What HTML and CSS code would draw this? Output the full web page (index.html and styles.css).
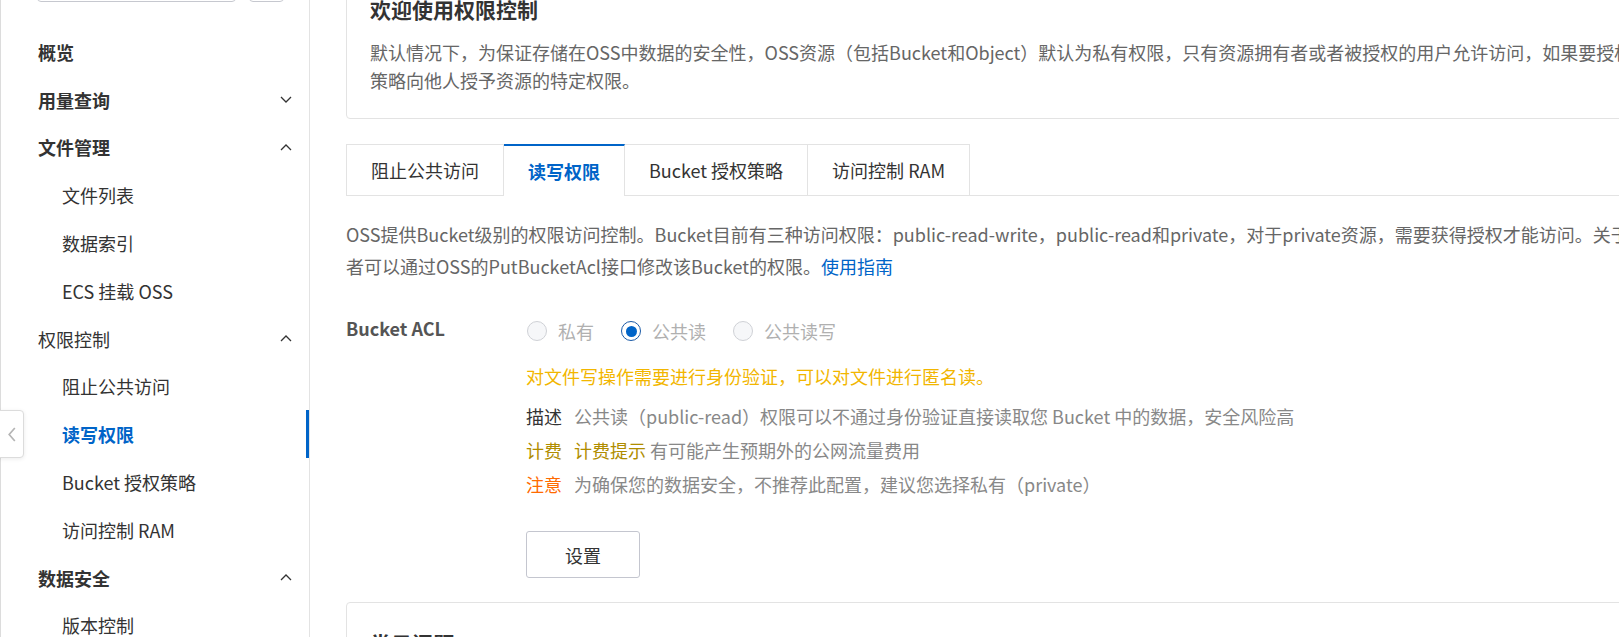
FILE: index.html
```html
<!DOCTYPE html>
<html lang="zh-CN">
<head>
<meta charset="utf-8">
<title>读写权限</title>
<link rel="stylesheet" href="styles.css">
</head>
<body>
<div class="app">
  <aside class="sidebar">
    <div class="search">
      <div class="search-input"></div>
      <div class="search-btn"></div>
    </div>
    <nav class="menu">
      <div class="item top">概览</div>
      <div class="item top">用量查询<svg class="chev" viewBox="0 0 12 7"><polyline points="1,1 6,6 11,1"/></svg></div>
      <div class="item top">文件管理<svg class="chev" viewBox="0 0 12 7"><polyline points="1,6 6,1 11,6"/></svg></div>
      <div class="item sub">文件列表</div>
      <div class="item sub">数据索引</div>
      <div class="item sub">ECS 挂载 OSS</div>
      <div class="item top plain">权限控制<svg class="chev" viewBox="0 0 12 7"><polyline points="1,6 6,1 11,6"/></svg></div>
      <div class="item sub">阻止公共访问</div>
      <div class="item sub active">读写权限</div>
      <div class="item sub">Bucket 授权策略</div>
      <div class="item sub">访问控制 RAM</div>
      <div class="item top">数据安全<svg class="chev" viewBox="0 0 12 7"><polyline points="1,6 6,1 11,6"/></svg></div>
      <div class="item sub">版本控制</div>
    </nav>
  </aside>
  <div class="collapse"><svg viewBox="0 0 10 16"><polyline points="8,1 2,8 8,15"/></svg></div>
  <main class="main">
    <section class="card welcome">
      <h2 class="card-title">欢迎使用权限控制</h2>
      <p class="card-text">默认情况下，为保证存储在OSS中数据的安全性，OSS资源（包括Bucket和Object）默认为私有权限，只有资源拥有者或者被授权的用户允许访问，如果要授权其他用户访问或使用您的OSS资源，可以通过多种<br>策略向他人授予资源的特定权限。</p>
    </section>
    <div class="tabs">
      <div class="tab">阻止公共访问</div>
      <div class="tab active">读写权限</div>
      <div class="tab">Bucket 授权策略</div>
      <div class="tab">访问控制 RAM</div>
    </div>
    <p class="intro">OSS提供Bucket级别的权限访问控制。Bucket目前有三种访问权限：public-read-write，public-read和private，对于private资源，需要获得授权才能访问。关于授权的更多信息，Bucket的拥有<br>者可以通过OSS的PutBucketAcl接口修改该Bucket的权限。<a class="link" href="#">使用指南</a></p>
    <div class="form-row">
      <div class="form-label">Bucket ACL</div>
      <div class="form-control">
        <div class="radios">
          <label class="radio"><span class="dot"></span>私有</label>
          <label class="radio checked"><span class="dot"></span>公共读</label>
          <label class="radio"><span class="dot"></span>公共读写</label>
        </div>
        <div class="warn">对文件写操作需要进行身份验证，可以对文件进行匿名读。</div>
        <div class="info"><span class="key">描述</span><span class="val">公共读（public-read）权限可以不通过身份验证直接读取您 Bucket 中的数据，安全风险高</span></div>
        <div class="info"><span class="key fee">计费</span><span class="val"><span class="fee">计费提示</span> 有可能产生预期外的公网流量费用</span></div>
        <div class="info"><span class="key note">注意</span><span class="val">为确保您的数据安全，不推荐此配置，建议您选择私有（private）</span></div>
        <button class="btn">设置</button>
      </div>
    </div>
    <section class="card faq">
      <h2 class="card-title">常见问题</h2>
    </section>
  </main>
</div>
</body>
</html>
```
FILE: styles.css
```css
* { box-sizing: border-box; }
html, body {
  margin: 0;
  padding: 0;
  overflow: hidden;
  background: #fff;
}
body {
  font-family: "Noto Sans CJK SC", "Noto Sans", sans-serif;
  font-size: 18px;
  color: #333;
  width: 1619px;
  height: 637px;
}
.app {
  position: relative;
  display: flex;
  width: 2100px;
  height: 637px;
}
.sidebar {
  flex: none;
  width: 310px;
  border-left: 1px solid #dcdcdc;
  border-right: 1px solid #e3e3e3;
}
.search {
  display: flex;
  margin-top: -38px;
  height: 40px;
}
.search-input {
  margin-left: 36px;
  width: 199px;
  height: 40px;
  border: 1px solid #c6c8cf;
  border-radius: 4px;
}
.search-btn {
  margin-left: 13px;
  width: 35px;
  height: 40px;
  border: 1px solid #c6c8cf;
  border-radius: 4px;
}
.menu {
  margin-top: 26px;
}
.item {
  position: relative;
  display: flex;
  align-items: center;
  justify-content: space-between;
  height: 47.8px;
  padding-right: 17px;
  line-height: 1;
  white-space: nowrap;
}
.item.top {
  padding-left: 37px;
  font-weight: 700;
  color: #333;
}
.item.top.plain {
  font-weight: 400;
}
.item.sub {
  padding-left: 61px;
  color: #333;
}
.item.active {
  color: #0064c8;
  font-weight: 700;
}
.item.active::after {
  content: "";
  position: absolute;
  right: 0;
  top: 0;
  width: 3px;
  height: 100%;
  background: #0064c8;
}
.chev {
  width: 12px;
  height: 7px;
  fill: none;
  stroke: #333;
  stroke-width: 1.3;
}
.collapse {
  position: absolute;
  left: -4px;
  top: 410px;
  width: 28px;
  height: 48px;
  background: #fff;
  border: 1px solid #dcdcdc;
  border-radius: 4px;
  box-shadow: 0 1px 4px rgba(0, 0, 0, 0.08);
  display: flex;
  align-items: center;
  justify-content: center;
  padding-left: 4px;
}
.collapse svg {
  width: 10px;
  height: 15px;
  fill: none;
  stroke: #b5b5b5;
  stroke-width: 1.8;
}
.main {
  flex: none;
  width: 1760px;
  padding-left: 36px;
}
.card {
  border: 1px solid #e3e3e3;
  border-radius: 4px;
  padding: 25px 24px 24px 23px;
}
.welcome {
  margin-top: -32px;
}
.card-title {
  margin: 0;
  font-size: 21px;
  line-height: 30px;
  font-weight: 700;
  color: #333;
}
.card-text {
  margin: 14px 0 0;
  line-height: 28px;
  color: #666;
  white-space: nowrap;
}
.tabs {
  margin-top: 25px;
  display: flex;
  align-items: flex-start;
  height: 52px;
  border-bottom: 1px solid #e3e3e3;
}
.tab {
  height: 51px;
  padding: 0 24px;
  display: flex;
  align-items: center;
  border-top: 1px solid #e3e3e3;
  border-right: 1px solid #e3e3e3;
  color: #333;
  white-space: nowrap;
  background: #fff;
}
.tab:first-child {
  border-left: 1px solid #e3e3e3;
}
.tab.active {
  height: 52px;
  border-top: 2px solid #0064c8;
  color: #0064c8;
  font-weight: 700;
}
.intro {
  margin: 22px 0 0;
  line-height: 32px;
  color: #666;
  white-space: nowrap;
}
.link {
  color: #0064c8;
  text-decoration: none;
}
.form-row {
  display: flex;
  margin-top: 33px;
}
.form-label {
  flex: none;
  width: 180px;
  line-height: 26px;
  font-weight: 600;
  color: #555;
}
.form-control {
  display: flex;
  flex-direction: column;
  align-items: flex-start;
}
.radios {
  display: flex;
  height: 32px;
  align-items: center;
}
.radio {
  display: flex;
  align-items: center;
  color: #b0b0b0;
  margin-right: 26px;
  padding-left: 1px;
}
.dot {
  position: relative;
  width: 20px;
  height: 20px;
  border-radius: 50%;
  border: 1px solid #cfd1d6;
  background: #f6f7f9;
  margin-right: 11px;
}
.radio.checked .dot {
  border: 1.5px solid #1b5aa6;
  background: #fff;
}
.radio.checked .dot::after {
  content: "";
  position: absolute;
  left: 50%;
  top: 50%;
  width: 11px;
  height: 11px;
  margin: -5.5px 0 0 -5.5px;
  border-radius: 50%;
  background: #0064c8;
}
.warn {
  margin-top: 13px;
  line-height: 32px;
  color: #f2b600;
}
.info {
  line-height: 34px;
  white-space: nowrap;
}
.warn + .info {
  margin-top: 7px;
}
.key {
  display: inline-block;
  width: 48px;
  color: #333;
}
.val {
  color: #888;
}
.fee {
  color: #b08d00;
}
.note {
  color: #ff6a00;
}
.btn {
  margin-top: 30px;
  width: 114px;
  height: 47px;
  border: 1px solid #c4c6cf;
  border-radius: 3px;
  background: #fff;
  font-family: inherit;
  font-size: 18px;
  color: #333;
}
.faq {
  margin-top: 24px;
  height: 200px;
}
```
